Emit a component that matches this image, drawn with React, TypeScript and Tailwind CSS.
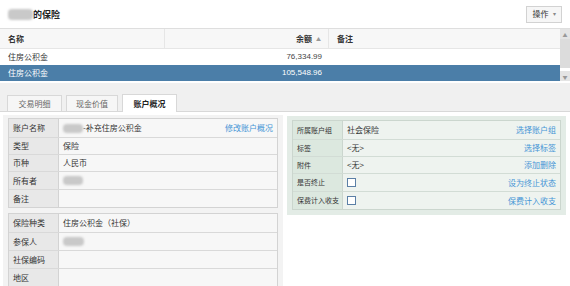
import React from "react";

const Blob = ({ w, h = 9 }: { w: number; h?: number }) => (
  <span
    className="inline-block rounded-[4px] bg-[#c9c9c9] blur-[1px] align-middle"
    style={{ width: w, height: h }}
  />
);

type Row = { label: string; value?: React.ReactNode; link?: string; h?: number };

function InfoTable({ rows, labelW, green }: { rows: Row[]; labelW: number; green?: boolean }) {
  return (
    <div className={`border ${green ? "border-[#cbd6ce]" : "border-[#d3d3d3]"}`}>
      {rows.map((r, i) => (
        <div
          key={i}
          className={`flex ${i > 0 ? (green ? "border-t border-[#d2dcd5]" : "border-t border-[#d9d9d9]") : ""}`}
          style={{ height: r.h ?? 17 }}
        >
          <div
            className={`flex shrink-0 items-center whitespace-nowrap pl-[4px] border-r ${
              green ? "bg-[#dce8df] border-[#cbd6ce] text-[7px]" : "bg-[#e8e8e8] border-[#d3d3d3]"
            }`}
            style={{ width: labelW }}
          >
            {r.label}
          </div>
          <div
            className={`flex flex-1 items-center justify-between pl-[4px] pr-[4px] ${
              green ? "bg-[#eef3ef]" : "bg-[#f7f7f7]"
            }`}
          >
            <span className="flex items-center whitespace-nowrap">{r.value}</span>
            {r.link && <span className="whitespace-nowrap text-[#4595d6]">{r.link}</span>}
          </div>
        </div>
      ))}
    </div>
  );
}

const Check = () => (
  <span className="inline-block h-[9px] w-[9px] border border-[#5b7fa6] bg-white" />
);

export default function App() {
  return (
    <div
      className="relative h-[286px] w-[570px] overflow-hidden bg-white text-[8px] leading-none text-[#333]"
      style={{ fontFamily: '"Noto Sans CJK SC", "Noto Sans", sans-serif' }}
    >
      {/* header */}
      <div className="flex h-[28px] items-center justify-between pl-[8px] pr-[8px]">
        <div className="flex items-center">
          <Blob w={25} h={11} />
          <span className="text-[9px] font-bold text-[#222]">的保险</span>
        </div>
        <div className="flex h-[17px] w-[36px] items-center justify-center gap-[4px] border border-[#d2d2d2] bg-[#f6f6f6] text-[8px] text-[#333]">
          <span>操作</span>
          <span className="text-[6px] text-[#888]">▾</span>
        </div>
      </div>

      {/* grid */}
      <div className="flex border-t border-[#dedede]">
        <div className="flex-1">
          <div className="flex h-[20px] items-center bg-[#f7f7f7] border-b border-[#e6e6e6]">
            <div className="w-[165px] border-r border-[#e6e6e6] h-full flex items-center pl-[8px] font-bold">名称</div>
            <div className="w-[164px] border-r border-[#e6e6e6] h-full flex items-center justify-end pr-[7px] font-bold gap-[4px]">
              余额<span className="text-[5px] text-[#999]">▲</span>
            </div>
            <div className="pl-[8px] font-bold">备注</div>
          </div>
          <div className="flex h-[16px] items-center">
            <div className="w-[165px] pl-[8px]">住房公积金</div>
            <div className="w-[164px] pr-[7px] text-right font-['Liberation_Sans'] text-[#444]">76,334.99</div>
          </div>
          <div className="flex h-[16px] items-center bg-[#4b7ea8] text-white">
            <div className="w-[165px] pl-[8px]">住房公积金</div>
            <div className="w-[164px] pr-[7px] text-right font-['Liberation_Sans']">105,548.96</div>
          </div>
        </div>
        <div className="flex w-[10px] flex-col bg-[#e4e4e4]">
          <div className="flex h-[10px] items-center justify-center text-[5px] text-[#999]">▲</div>
          <div className="flex-1 bg-[#dcdcdc]" />
          <div className="h-[3px] bg-white" />
          <div className="flex h-[10px] items-center justify-center text-[5px] text-[#999]">▼</div>
        </div>
      </div>

      {/* tabs */}
      <div className="mt-[2px] flex h-[29px] items-end gap-[4px] border-b border-[#d8d8d8] bg-[#f0f0f0] pl-[7px]">
        <div className="mb-[-1px] flex h-[17px] w-[55px] items-center justify-center border border-[#d8d8d8] bg-[#f6f6f6] text-[#666]">交易明细</div>
        <div className="mb-[-1px] flex h-[17px] w-[52px] items-center justify-center border border-[#d8d8d8] bg-[#f6f6f6] text-[#666]">现金价值</div>
        <div className="mb-[-1px] flex h-[18px] w-[55px] items-center justify-center border border-b-0 border-[#d8d8d8] bg-white font-bold text-[#222]">账户概况</div>
      </div>

      {/* content */}
      <div className="flex items-start gap-[4px] pl-[3px] pt-[3px]">
        <div className="flex h-[200px] w-[280px] flex-col gap-[5px] bg-[#f3f3f3] px-[5px] pt-[3px] pb-[4px]">
          <InfoTable
            labelW={50}
            rows={[
              { label: "账户名称", value: <><Blob w={20} /><span>-补充住房公积金</span></>, link: "修改账户概况", h: 18 },
              { label: "类型", value: "保险" },
              { label: "币种", value: "人民币" },
              { label: "所有者", value: <Blob w={20} />, h: 18 },
              { label: "备注", value: "", h: 18 },
            ]}
          />
          <InfoTable
            labelW={50}
            rows={[
              { label: "保险种类", value: "住房公积金（社保）", h: 18 },
              { label: "参保人", value: <Blob w={21} />, h: 18 },
              { label: "社保编码", value: "", h: 18 },
              { label: "地区", value: "", h: 18 },
            ]}
          />
        </div>
        <div className="mt-[1px] w-[279px] bg-[#e3ece6] px-[5px] pt-[4px] pb-[5px]">
          <InfoTable
            green
            labelW={50}
            rows={[
              { label: "所属账户组", value: "社会保险", link: "选择账户组", h: 18 },
              { label: "标签", value: "<无>", link: "选择标签" },
              { label: "附件", value: "<无>", link: "添加删除" },
              { label: "是否终止", value: <Check />, link: "设为终止状态", h: 18 },
              { label: "保费计入收支", value: <Check />, link: "保费计入收支", h: 18 },
            ]}
          />
        </div>
      </div>
    </div>
  );
}
